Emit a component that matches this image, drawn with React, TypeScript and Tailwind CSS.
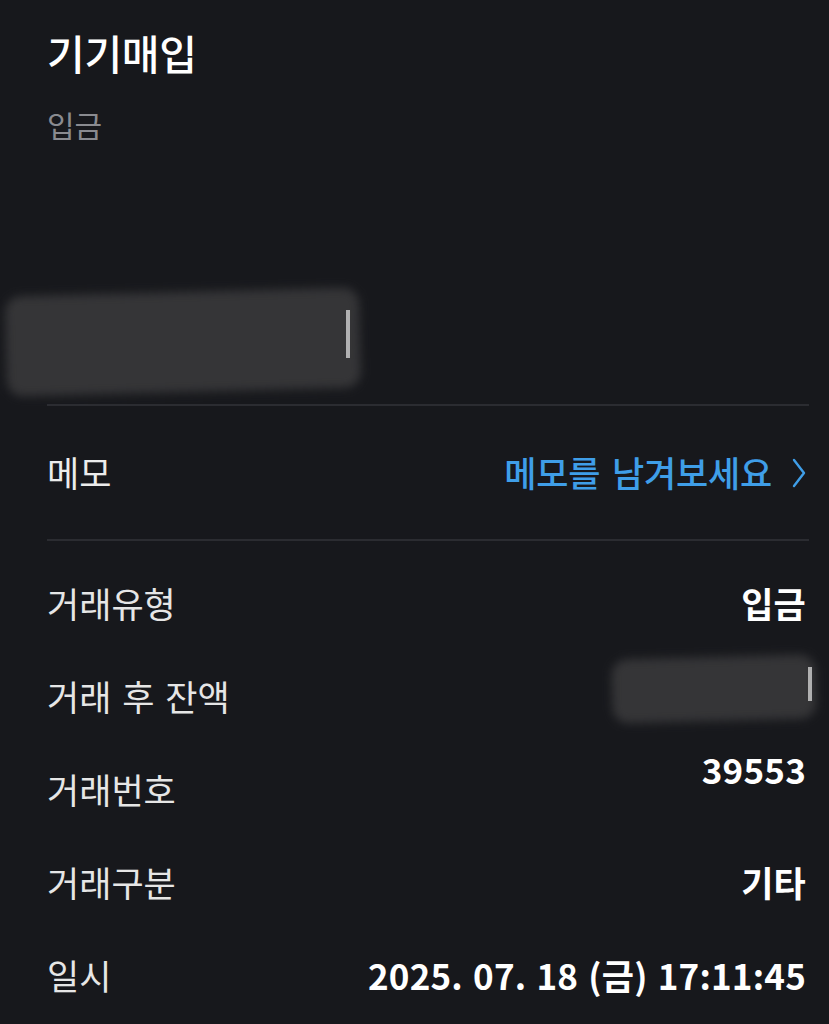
import React from "react";

const rows: { label: string; value: React.ReactNode; offset?: string }[] = [
  { label: "거래유형", value: "입금" },
  { label: "거래 후 잔액", value: null },
  { label: "거래번호", value: "39553", offset: "-translate-y-[20px]" },
  { label: "거래구분", value: "기타" },
  { label: "일시", value: "2025. 07. 18 (금) 17:11:45" },
];

function Redacted({ w, h, mark }: { w: string; h: string; mark: string }) {
  return (
    <div className={`relative ${w} ${h}`}>
      <div className="absolute inset-0 bg-[#353537] rounded-[16px] blur-[5px] -rotate-[1.5deg]" />
      <div className={`absolute ${mark} w-[4px] bg-[#d0d0d0] opacity-80`} />
    </div>
  );
}

export default function App() {
  return (
    <div
      className="w-[829px] h-[1024px] overflow-hidden bg-[#17181c] text-[#ececec]"
      style={{ fontFamily: '"Noto Sans CJK KR", "Noto Sans", sans-serif' }}
    >
      <div className="pl-[47px] pr-[23px] pt-[24px]">
        <div className="text-[41px] leading-[56px] font-medium text-white tracking-[-0.3px]">기기매입</div>
        <div className="mt-[24px] text-[30px] leading-[40px] text-[#8a8b90]">입금</div>
      </div>

      {/* redacted amount */}
      <div className="pt-[148px] pb-[12px] pl-[6px]">
        <Redacted w="w-[354px]" h="h-[100px]" mark="right-[10px] top-[18px] h-[48px]" />
      </div>

      <div className="pl-[47px] pr-[20px]">
        <div className="h-[2px] bg-[#2b2c31]" />
        <div className="h-[133px] flex items-center justify-between pr-[3px]">
          <span className="text-[35px] text-[#ececec]">메모</span>
          <span className="flex items-center gap-[20px] text-[35px] text-[#3f9ee8] font-medium tracking-[-0.2px] [word-spacing:4px]">
            메모를 남겨보세요
            <svg width="14" height="30" viewBox="0 0 14 30" fill="none">
              <path d="M2 2 L12 15 L2 28" stroke="#3f9ee8" strokeWidth="2.4" strokeLinecap="round" strokeLinejoin="round" />
            </svg>
          </span>
        </div>
        <div className="h-[2px] bg-[#2b2c31]" />
      </div>

      <div className="pl-[47px] pr-[23px] pt-[16px]">
        {rows.map((r) => (
          <div key={r.label} className="h-[93px] flex items-center justify-between">
            <span className="text-[35px] text-[#e6e6e6] [word-spacing:3px]">{r.label}</span>
            {r.value === null ? (
              <div className="-mr-[10px] -translate-y-[8px]">
                <Redacted w="w-[204px]" h="h-[64px]" mark="right-[4px] top-[10px] h-[34px]" />
              </div>
            ) : (
              <span className={`text-[35px] font-semibold text-white tracking-[0.2px] [word-spacing:2px] ${r.offset ?? ""}`}>{r.value}</span>
            )}
          </div>
        ))}
      </div>
    </div>
  );
}
